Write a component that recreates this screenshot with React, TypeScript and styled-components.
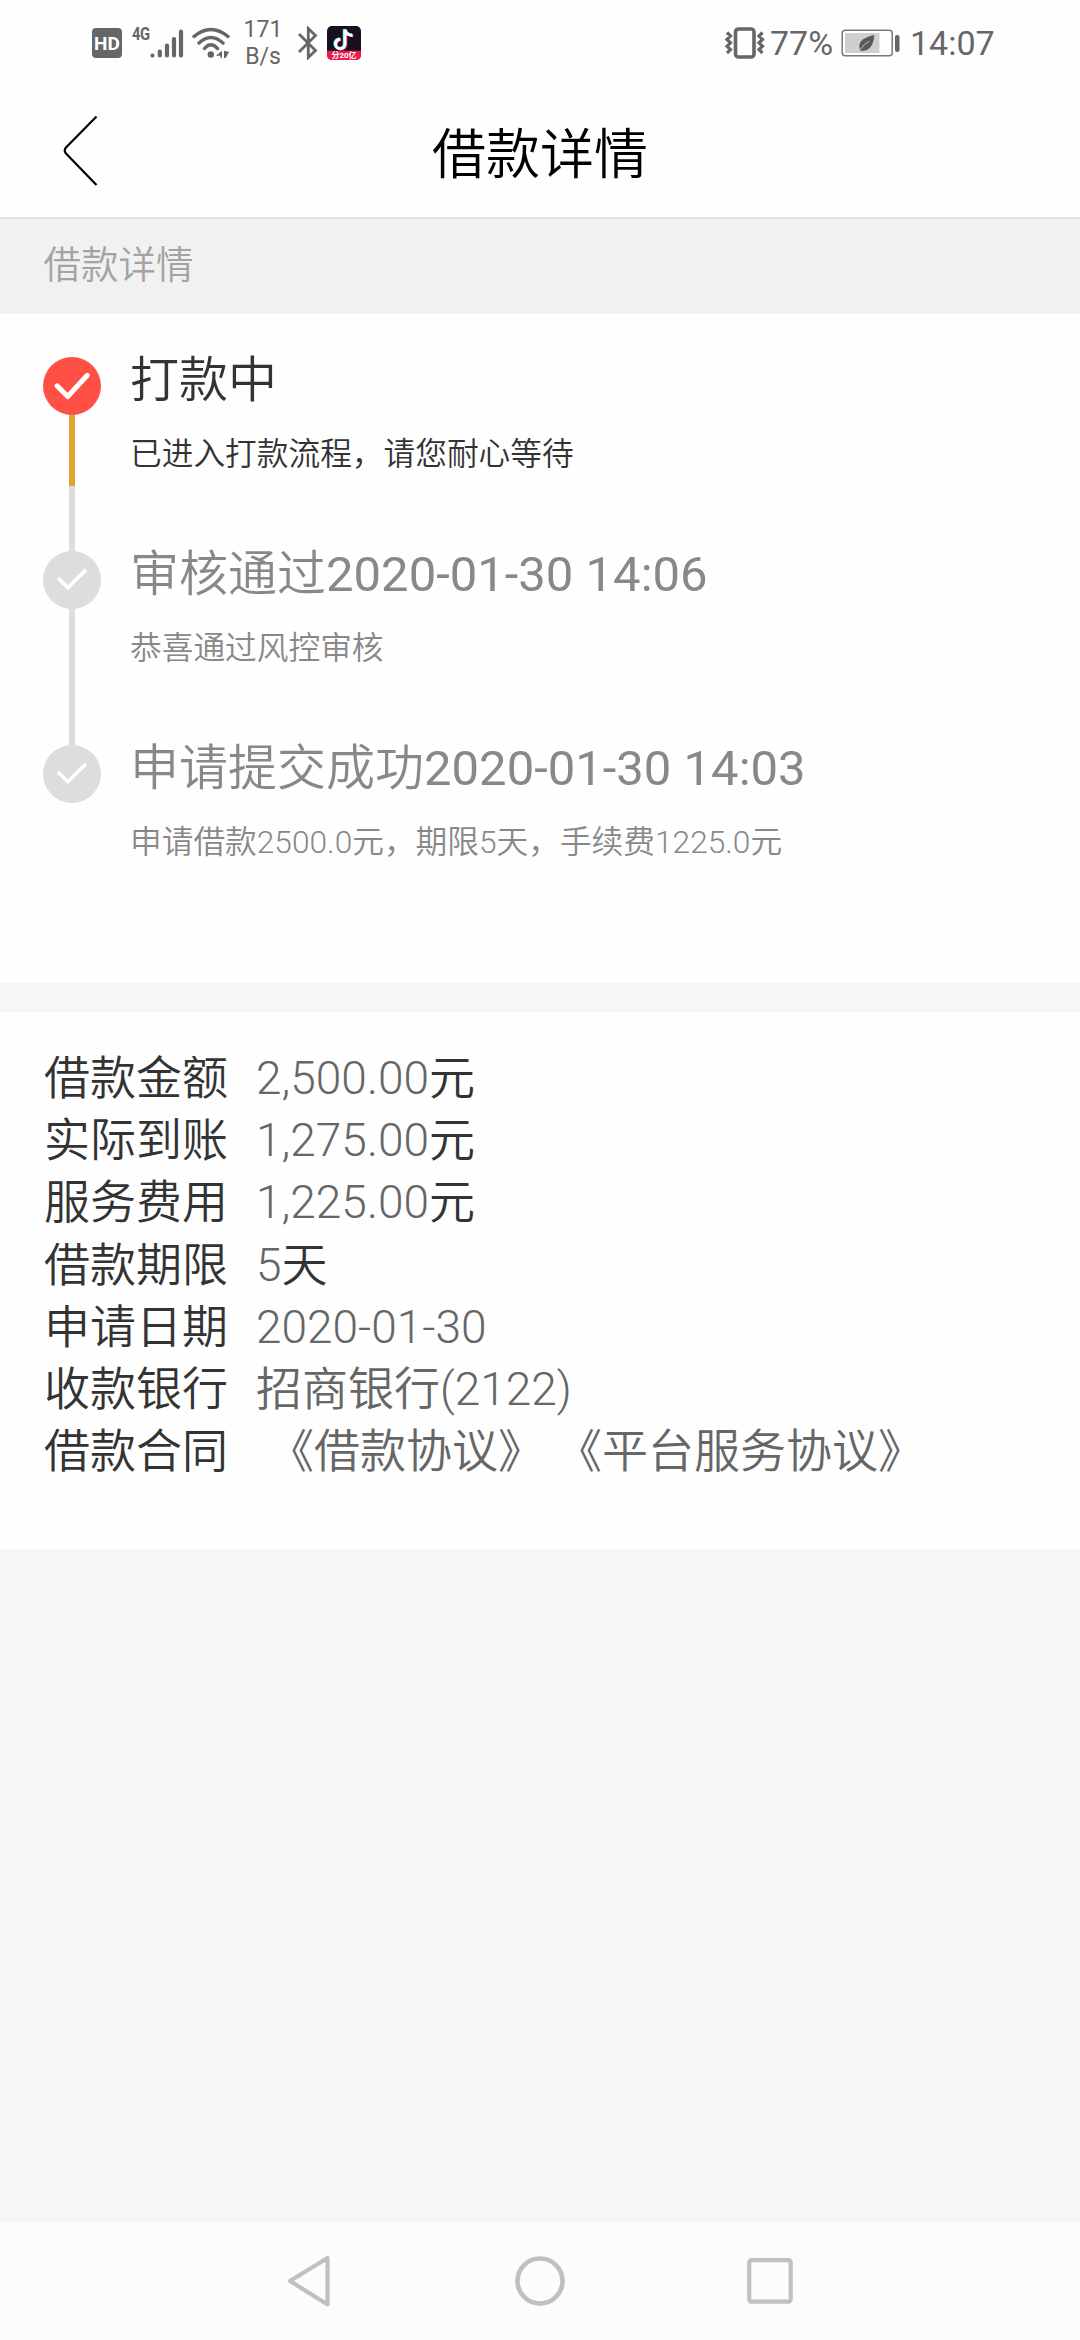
import React from "react";
import styled, { createGlobalStyle } from "styled-components";

const Global = createGlobalStyle`
  * { box-sizing: border-box; }
  html, body { margin: 0; padding: 0; background: #f6f6f6; }
  body {
    font-family: Roboto, "Noto Sans CJK SC", sans-serif;
    font-weight: 350;
    text-spacing-trim: space-all;
  }
`;

const Screen = styled.div`
  width: 1080px;
  height: 2340px;
  display: flex;
  flex-direction: column;
  background: #f6f6f6;
  overflow: hidden;
`;

const StatusBar = styled.div`
  height: 84px;
  flex: none;
  display: flex;
  justify-content: space-between;
  padding: 0 87px 0 91px;
  background: #fefefe;
  color: #666;
  font-weight: 400;
`;

const StatusGroup = styled.div`
  display: flex;
  align-items: center;
  height: 86px;
`;

const StatusIcon = styled.svg<{ $gap?: number }>`
  display: block;
  flex: none;
  margin-left: ${(p) => p.$gap ?? 0}px;
`;

const NetworkType = styled.span`
  font: 700 19px/20px Roboto, sans-serif;
  letter-spacing: -0.5px;
  width: 20px;
  margin: 0 -2px 18px 10px;
  transform: scaleX(0.78);
  transform-origin: left;
`;

const NetSpeed = styled.div`
  width: 40px;
  margin-left: 13px;
  font-size: 23px;
  line-height: 27px;
  text-align: center;
`;

const StatusText = styled.span<{ $gap: number; $width: number }>`
  width: ${(p) => p.$width}px;
  margin-left: ${(p) => p.$gap}px;
  font-size: 34px;
  line-height: 40px;
  white-space: nowrap;
`;

const Header = styled.header`
  height: 135px;
  flex: none;
  display: grid;
  grid-template-columns: 160px 1fr 160px;
  background: #fefefe;
  border-bottom: 2px solid #e0e0e0;
`;

const BackButton = styled.button`
  border: 0;
  padding: 30px 0 0 60px;
  background: none;
  display: flex;
  align-items: flex-start;
`;

const Title = styled.h1`
  margin: 0;
  font-size: 54px;
  font-weight: 350;
  line-height: 143px;
  text-align: center;
  color: #000;
`;

const SectionTitle = styled.div`
  height: 95px;
  flex: none;
  padding-left: 43.5px;
  background: #f1f1f1;
  color: #a3a3a3;
  font-size: 37.5px;
  line-height: 93px;
`;

const Timeline = styled.ol`
  height: 669px;
  flex: none;
  margin: 0;
  padding: 43px 0 0 43px;
  list-style: none;
  background: #fefefe;
`;

const Step = styled.li`
  height: 194px;
  display: flex;
`;

const Rail = styled.div`
  width: 58px;
  display: flex;
  flex-direction: column;
  align-items: center;
`;

const RailLine = styled.div<{ $color: string; $height?: number }>`
  width: 6px;
  flex: ${(p) => (p.$height ? "none" : "1")};
  height: ${(p) => (p.$height ? `${p.$height}px` : "auto")};
  background: ${(p) => p.$color};
`;

const StepBody = styled.div<{ $active: boolean }>`
  padding-left: 29px;
  color: ${(p) => (p.$active ? "#333" : "#888")};
  white-space: nowrap;
`;

const StepTitle = styled.div`
  font-size: 49px;
  line-height: 60px;
  margin-top: -6px;
`;

const StepNote = styled.div`
  font-size: 31.7px;
  line-height: 44px;
  margin-top: 22px;
`;

const Details = styled.dl`
  height: 537px;
  flex: none;
  margin: 29px 0 0;
  padding: 35px 0 0 44px;
  background: #fefefe;
  font-size: 46px;
  color: #333;
`;

const DetailRow = styled.div`
  display: flex;
  height: 62.2px;
  line-height: 62.2px;
  white-space: nowrap;
`;

const DetailLabel = styled.dt`
  width: 212px;
`;

const DetailValue = styled.dd`
  margin: 0;
`;

const Muted = styled.span`
  color: #666;
`;

const Latin = styled.span<{ $weight: number }>`
  font-weight: ${(p) => p.$weight};
`;

const Agreement = styled.a`
  display: inline-block;
  color: #666;
  margin-left: 12px;
`;

const NavBar = styled.nav`
  height: 118px;
  flex: none;
  margin-top: auto;
  display: flex;
  justify-content: space-between;
  align-items: center;
  padding: 0 287px 0 286px;
  background: #fcfcfc;
`;

/* Latin digits and punctuation carry their own weight beside the Chinese text. */
const MixedText = ({ children, weight = 300 }: { children: string; weight?: number }) => (
  <>
    {children.split(/([\x20-\x7e]+)/).map((part, i) =>
      i % 2 ? <Latin key={i} $weight={weight}>{part}</Latin> : part
    )}
  </>
);

const CheckMark = ({ active }: { active: boolean }) => (
  <svg width="58" height="58" viewBox="0 0 58 58">
    <circle cx="29" cy="29" r="29" fill={active ? "#ff5046" : "#ddd"} />
    {active ? (
      <path d="M14 28.800L24.700 39.500L44.300 18.300" fill="none" stroke="#fff" strokeWidth="5" strokeLinecap="round" strokeLinejoin="round" />
    ) : (
      <path d="M15 27L24.800 36.800L43 18.900" fill="none" stroke="#fff" strokeWidth="3.600" />
    )}
  </svg>
);

type StepData = { title: string; note: string; active?: boolean };

const steps: StepData[] = [
  { title: "打款中", note: "已进入打款流程，请您耐心等待", active: true },
  { title: "审核通过2020-01-30 14:06", note: "恭喜通过风控审核" },
  { title: "申请提交成功2020-01-30 14:03", note: "申请借款2500.0元，期限5天，手续费1225.0元" },
];

const details: { label: string; value: string; unit?: string }[] = [
  { label: "借款金额", value: "2,500.00", unit: "元" },
  { label: "实际到账", value: "1,275.00", unit: "元" },
  { label: "服务费用", value: "1,225.00", unit: "元" },
  { label: "借款期限", value: "5", unit: "天" },
  { label: "申请日期", value: "2020-01-30" },
  { label: "收款银行", value: "招商银行(2122)" },
];

const agreements = ["《借款协议》", "《平台服务协议》"];

export default function App() {
  return (
    <Screen>
      <Global />
      <StatusBar>
        <StatusGroup>
          <StatusIcon width="31" height="30" viewBox="0 0 31 30">
            <rect x="1" y="0" width="30" height="30" rx="4" fill="#666" />
            <text x="16" y="22" textAnchor="middle" fontFamily="Roboto" fontWeight="700" fontSize="19" fill="#fff">HD</text>
          </StatusIcon>
          <NetworkType>4G</NetworkType>
          <StatusIcon width="34" height="32" viewBox="0 0 34 32" stroke="#666" strokeWidth="4.2" strokeLinecap="round">
            <path d="M2.5 28.5v.1M9.8 24.5v4M17 18.5v10M24 12v16.500M31 4.500v24" />
          </StatusIcon>
          <StatusIcon $gap={8} width="38" height="32" viewBox="0 0 38 32" fill="none" stroke="#666" strokeLinecap="round">
            <path d="M2 9.500Q18.800 -4.500 36 9.500M7 16Q18.800 5 31 16M12.500 21.500Q18.800 14 25.500 21.500" strokeWidth="3.4" />
            <circle cx="18.800" cy="27.500" r="3.200" fill="#666" stroke="none" />
            <path d="M30 23.800v7h-1.600v-2h-4.400zM32 23.800l5 1.200-3.300 6h-1.700z" fill="#666" stroke="none" />
          </StatusIcon>
          <NetSpeed>171<br />B/s</NetSpeed>
          <StatusIcon $gap={15} width="20" height="34" viewBox="0 0 20 34" fill="none" stroke="#666" strokeWidth="2.800">
            <path d="M1 8L17.500 24.500L10.300 31.500V2.500L17.500 9.500L1 26" />
          </StatusIcon>
          <StatusIcon $gap={9} width="34" height="34" viewBox="0 0 34 34">
            <rect width="34" height="34" rx="5" fill="#16101f" />
            <path d="M0 24.700h34v4.300a5 5 0 0 1-5 5H5a5 5 0 0 1-5-5z" fill="#ec1c50" />
            <g fill="none" strokeWidth="3">
              <path d="M17.200 3v14.500a4.700 4.700 0 1 1-4.700-4.700M17.200 3q1 5.500 7.500 6" stroke="#27e3e6" />
              <path d="M18.800 4v14.500a4.700 4.700 0 1 1-4.700-4.700M18.800 4q1 5.500 7.500 6" stroke="#f5285b" />
              <path d="M18 3.500v14.500a4.700 4.700 0 1 1-4.700-4.700M18 3.500q1 5.500 7.500 6" stroke="#fff" />
            </g>
            <text x="17" y="32.300" textAnchor="middle" fontFamily="Roboto, Noto Sans CJK SC" fontWeight="700" fontSize="8" fill="#fff">分20亿</text>
          </StatusIcon>
        </StatusGroup>
        <StatusGroup>
          <StatusIcon width="42" height="32" viewBox="0 0 42 32" fill="none" stroke="#666">
            <rect x="11.500" y="2" width="18.500" height="28" rx="3" strokeWidth="3.600" />
            <path d="M3 5.500l3.500 3.500-3.500 3.400 3.500 3.400-3.500 3.400 3.500 3.400-3.500 3.400M38.500 5.500l-3.500 3.500 3.500 3.400-3.500 3.400 3.500 3.400-3.500 3.400 3.500 3.400" strokeWidth="3.200" />
          </StatusIcon>
          <StatusText $gap={4} $width={61}>77%</StatusText>
          <StatusIcon $gap={10} width="60" height="28" viewBox="0 0 60 28">
            <rect x="1.200" y="1.200" width="50" height="25.500" rx="3" fill="#fff" stroke="#777" strokeWidth="1.500" />
            <rect x="4" y="4" width="34.500" height="20" fill="#cfcfcf" />
            <path d="M33.300 6C25 8 17 11 18.500 19.500L19.500 22C28 22.500 32.500 17 33.300 6z" fill="#595959" />
            <path d="M19 21Q23 14.500 28.500 12" stroke="#cfcfcf" strokeWidth="0.900" fill="none" />
            <rect x="54" y="6" width="4.500" height="17" rx="2" fill="#666" />
          </StatusIcon>
          <StatusText $gap={9} $width={83}>14:07</StatusText>
        </StatusGroup>
      </StatusBar>

      <Header>
        <BackButton aria-label="返回">
          <svg width="40" height="74" viewBox="0 0 40 74" fill="none" stroke="#000" strokeWidth="2.200">
            <path d="M36.500 2.500L6 33.500Q3.500 36.500 6 39.500L36.500 71" />
          </svg>
        </BackButton>
        <Title>借款详情</Title>
      </Header>
      <SectionTitle>借款详情</SectionTitle>

      <Timeline>
        {steps.map((s, i) => (
          <Step key={s.title}>
            <Rail>
              <CheckMark active={!!s.active} />
              {s.active && <RailLine $color="#dfa52e" $height={71} />}
              {i < steps.length - 1 && <RailLine $color="#ddd" />}
            </Rail>
            <StepBody $active={!!s.active}>
              <StepTitle><MixedText weight={400}>{s.title}</MixedText></StepTitle>
              <StepNote><MixedText>{s.note}</MixedText></StepNote>
            </StepBody>
          </Step>
        ))}
      </Timeline>

      <Details>
        {details.map((d) => (
          <DetailRow key={d.label}>
            <DetailLabel>{d.label}</DetailLabel>
            <DetailValue><Muted><MixedText>{d.value}</MixedText></Muted>{d.unit}</DetailValue>
          </DetailRow>
        ))}
        <DetailRow>
          <DetailLabel>借款合同</DetailLabel>
          <DetailValue>
            {agreements.map((a) => <Agreement key={a}>{a}</Agreement>)}
          </DetailValue>
        </DetailRow>
      </Details>

      <NavBar>
        <svg width="47" height="56" viewBox="0 0 47 56" fill="none" stroke="#c0c0c0" strokeWidth="4.200" strokeLinejoin="round">
          <path d="M41.500 5V51.500L4 28z" />
        </svg>
        <svg width="50" height="50" viewBox="0 0 50 50" fill="none" stroke="#c0c0c0" strokeWidth="4.600">
          <circle cx="25" cy="25" r="22.500" />
        </svg>
        <svg width="46" height="46" viewBox="0 0 46 46" fill="none" stroke="#c0c0c0" strokeWidth="4.200">
          <rect x="2.200" y="2.200" width="41.500" height="41.500" rx="2.500" />
        </svg>
      </NavBar>
    </Screen>
  );
}
